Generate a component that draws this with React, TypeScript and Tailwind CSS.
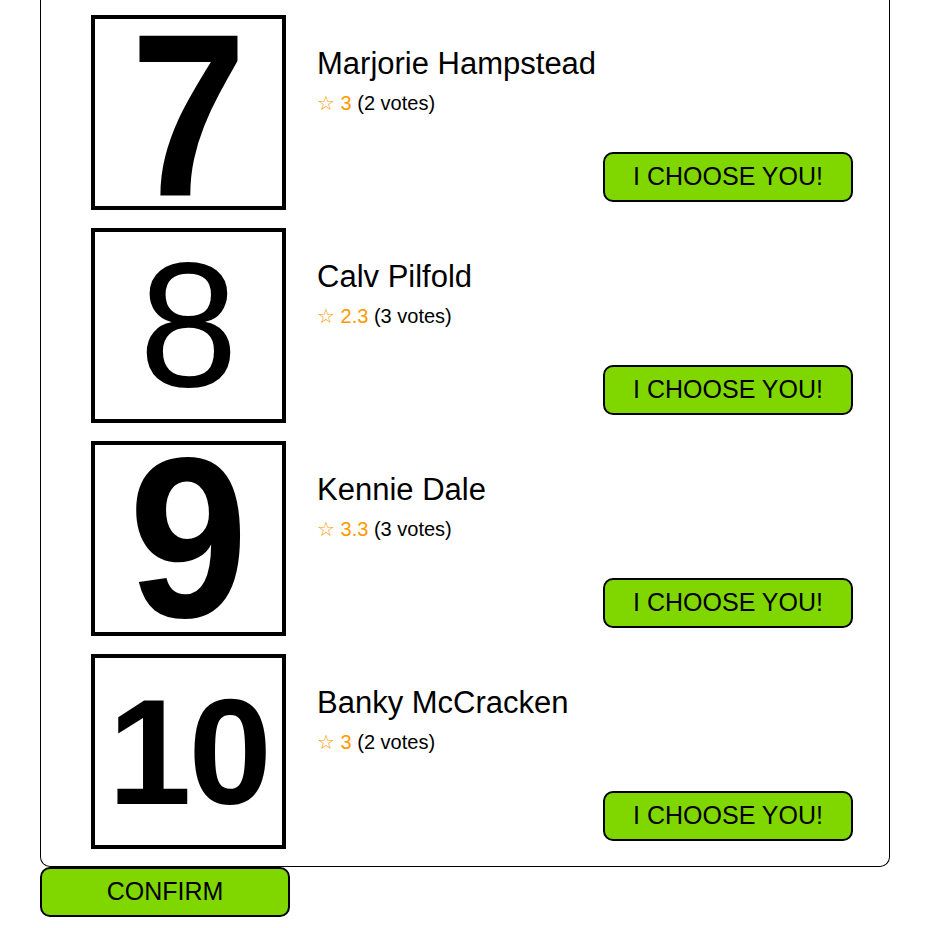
import React from 'react';

type Candidate = {
  name: string
  rating: string
  votes: number
  digit: string
  digitClass: string
}

const CANDIDATES: Candidate[] = [
  { name: 'Marjorie Hampstead', rating: '3', votes: 2, digit: '7', digitClass: 'font-bold text-[232px] scale-x-[0.9] translate-y-[3px]' },
  { name: 'Calv Pilfold', rating: '2.3', votes: 3, digit: '8', digitClass: 'font-normal text-[178px]' },
  { name: 'Kennie Dale', rating: '3.3', votes: 3, digit: '9', digitClass: 'font-bold text-[228px] scale-x-[0.94]' },
  { name: 'Banky McCracken', rating: '3', votes: 2, digit: '10', digitClass: 'font-bold text-[150px] tracking-[-3px]' },
];

function Row({ c }: { c: Candidate }) {
  return (
    <div className="flex pl-[50px] pr-[36px]">
      <div className="w-[195px] h-[195px] shrink-0 border-4 border-black bg-white flex items-center justify-center">
        <span className={`block leading-[0.8] text-black ${c.digitClass}`}>{c.digit}</span>
      </div>
      <div className="flex-1 flex flex-col pl-[31px]">
        <div className="mt-[29px] text-[31px] leading-[40px] text-black">{c.name}</div>
        <div className="mt-[6px] text-[20px] leading-[26px] text-black">
          <span className="text-[#ff9900]">☆ {c.rating}</span> ({c.votes} votes)
        </div>
        <button className="mt-auto mb-[8px] self-end w-[250px] h-[50px] rounded-[10px] border-2 border-black bg-[#80d700] text-[25px] text-black">
          I CHOOSE YOU!
        </button>
      </div>
    </div>
  );
}

export default function App() {
  return (
    <div className="min-h-screen bg-white font-['Liberation_Sans',Arial,sans-serif]">
      <div className="ml-[40px] w-[850px] border border-t-0 border-black rounded-b-[10px] pt-[15px] pb-[17px] flex flex-col gap-[18px]">
        {CANDIDATES.map(c => <Row key={c.name} c={c} />)}
      </div>
      <button className="ml-[40px] w-[250px] h-[50px] rounded-[10px] border-2 border-black bg-[#80d700] text-[25px] text-black">
        CONFIRM
      </button>
    </div>
  );
}
